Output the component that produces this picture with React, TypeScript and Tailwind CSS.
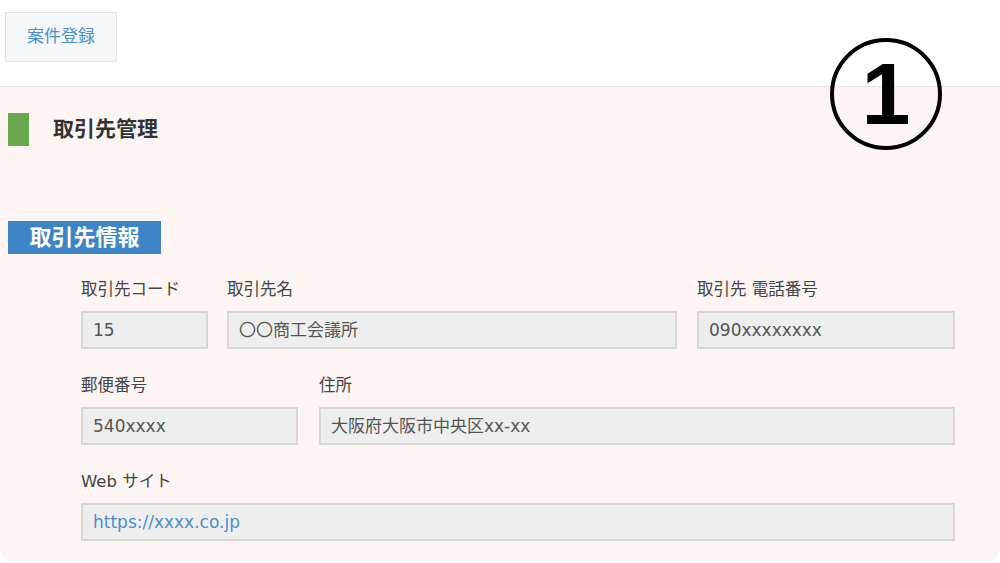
import React from "react";

const font = { fontFamily: '"DejaVu Sans", "Noto Sans CJK JP", sans-serif' };

function Field({ label, value, width, link }: { label: string; value: string; width: string; link?: boolean }) {
  return (
    <div className={`flex shrink-0 flex-col ${width}`}>
      <div className="h-[24px] text-[16.5px] leading-[24px] text-[#444]">{label}</div>
      <div
        className={`mt-[9px] h-[38px] border-2 border-[#d6d6d6] bg-[#eeeeee] pl-[10px] text-[17px] leading-[34px] ${
          link ? "text-[#4a8fd0]" : "text-[#555]"
        }`}
      >
        {value}
      </div>
    </div>
  );
}

export default function App() {
  return (
    <div className="relative h-[563px] w-[1000px] overflow-hidden bg-white" style={font}>
      <div className="h-[86px] pl-[5px] pt-[12px]">
        <div className="flex h-[50px] w-[112px] items-center justify-center border border-[#dfe4e8] bg-[#f5f8fb] text-[17px] text-[#4a90d0]">
          案件登録
        </div>
      </div>
      <div className="h-[476px] rounded-b-[14px] border-t border-[#e6e6e6] bg-[#fdf5f3] pt-[26px]">
        <div className="flex items-center">
          <div className="ml-[8px] h-[33px] w-[21px] bg-[#6aa84f]" />
          <div className="ml-[24px] text-[21px] font-bold text-[#333]">取引先管理</div>
        </div>
        <div className="ml-[8px] mt-[75px] flex h-[33px] w-[153px] items-center justify-center bg-[#3d85c6] text-[22px] font-bold text-white">
          取引先情報
        </div>
        <div className="ml-[81px] mt-[24px] flex w-[874px] flex-col gap-[25px]">
          <div className="flex">
            <Field label="取引先コード" value="15" width="w-[127px]" />
            <div className="w-[19px] shrink-0" />
            <Field label="取引先名" value="〇〇商工会議所" width="w-[450px]" />
            <div className="w-[20px] shrink-0" />
            <Field label="取引先 電話番号" value="090xxxxxxxx" width="w-[258px]" />
          </div>
          <div className="flex gap-[21px]">
            <Field label="郵便番号" value="540xxxx" width="w-[217px]" />
            <Field label="住所" value="大阪府大阪市中央区xx-xx" width="w-[636px]" />
          </div>
          <div className="flex">
            <Field label="Web サイト" value="https://xxxx.co.jp" width="w-[874px]" link />
          </div>
        </div>
      </div>
      <div className="absolute left-[830px] top-[38px] flex h-[112px] w-[112px] items-center justify-center rounded-full border-[4px] border-black">
        <span
          className="text-[88px] font-black leading-none text-black"
          style={{ fontFamily: '"Liberation Sans", Arial, sans-serif' }}
        >
          1
        </span>
      </div>
    </div>
  );
}
